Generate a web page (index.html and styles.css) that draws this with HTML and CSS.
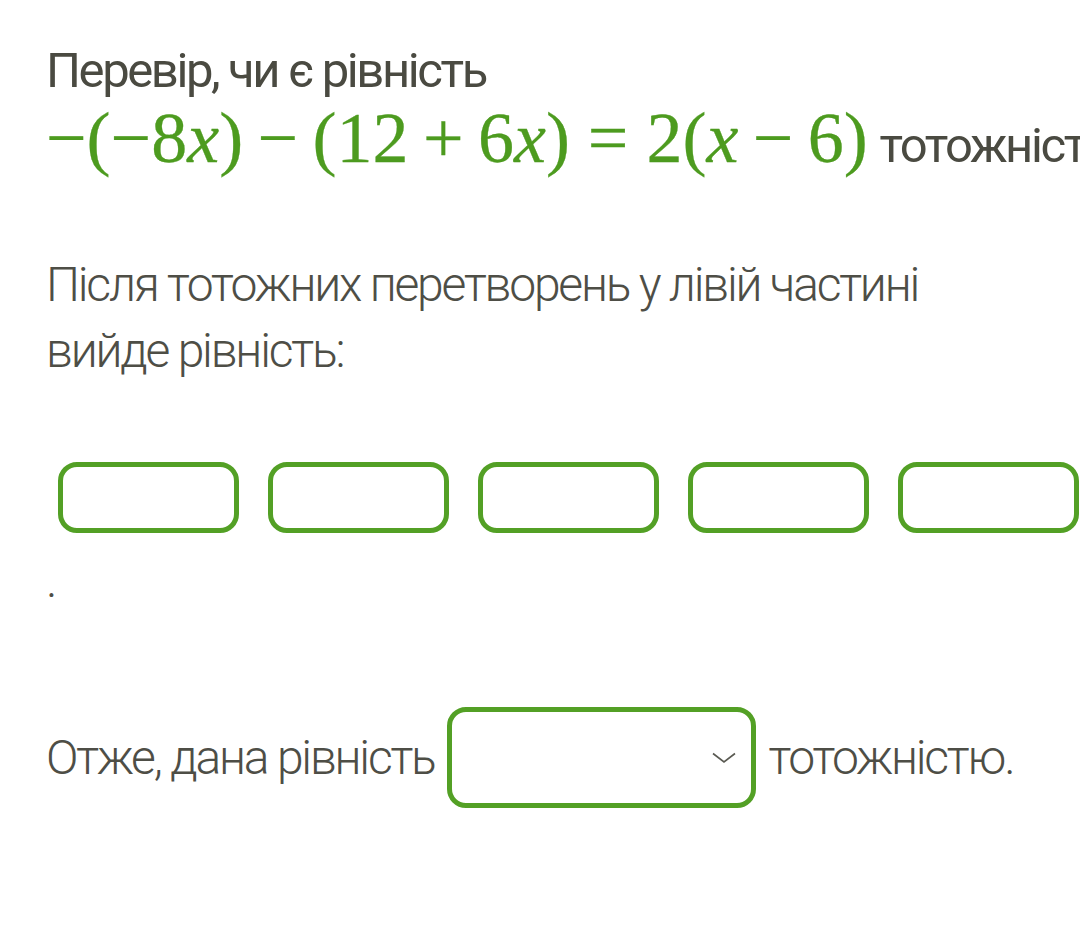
FILE: index.html
```html
<!DOCTYPE html>
<html lang="uk">
<head>
    <meta charset="UTF-8">
    <meta name="viewport" content="width=device-width, initial-scale=1.0">
    <title>Тотожність</title>
    <link rel="stylesheet" href="styles.css">
</head>
<body>
    <div class="task">
        <div class="task-title">Перевір, чи є рівність</div>
        <div class="task-line">
            <span class="math"><span>−(−8</span><i>x</i><span>)</span><span class="bin">−</span><span>(12</span><span class="bin">+</span><span>6</span><i>x</i><span>)</span><span class="rel">=</span><span>2(</span><i>x</i><span class="bin">−</span><span>6)</span></span>
            тотожністю.
        </div>

        <p class="text">Після тотожних перетворень у лівій частині<br>вийде рівність:</p>

        <div class="slots">
            <div class="slot"></div>
            <div class="slot"></div>
            <div class="slot"></div>
            <div class="slot"></div>
            <div class="slot"></div>
        </div>
        <p class="text dot">.</p>

        <div class="answer">
            <span class="text">Отже, дана рівність</span>
            <div class="select">
                <svg width="24" height="12" viewBox="0 0 24 12"><path d="M1 1.5 L12 10 L23 1.5" fill="none" stroke="#5a5a52" stroke-width="1.6"/></svg>
            </div>
            <span class="text">тотожністю.</span>
        </div>
    </div>
</body>
</html>
```
FILE: styles.css
```css
body {
    margin: 0;
    background: #fff;
    font-family: Roboto, "Noto Sans", sans-serif;
    color: #4a4a41;
    overflow: hidden;
}
.task {
    padding: 33px 0 0 46px;
}
.task-title,
.task-line {
    font-size: 49px;
    font-weight: 400;
    line-height: 75px;
    letter-spacing: -2.4px;
    white-space: nowrap;
}
.math {
    font-family: "Liberation Serif", "DejaVu Serif", serif;
    font-weight: 400;
    font-size: 72px;
    line-height: 0;
    letter-spacing: 0;
    color: #4d9b1f;
    margin-right: 2px;
    -webkit-text-stroke: 0.3px #4d9b1f;
}
.math i {
    font-style: italic;
}
.bin {
    margin: 0 0.2em;
}
.rel {
    margin: 0 0.25em;
}
.text {
    font-size: 48px;
    font-weight: 300;
    line-height: 66px;
    letter-spacing: -2.2px;
    white-space: nowrap;
    color: #4e4e46;
}
p.text {
    margin: 69px 0 0;
}
.slots {
    display: flex;
    gap: 29px;
    margin: 78px 0 0 12px;
}
.slot {
    width: 181px;
    height: 71px;
    box-sizing: border-box;
    border: 5px solid #53a025;
    border-radius: 19px;
}
p.dot {
    margin-top: 15px;
}
.answer {
    display: flex;
    align-items: center;
    margin-top: 93px;
}
.select {
    width: 309px;
    height: 101px;
    box-sizing: border-box;
    border: 5px solid #53a025;
    border-radius: 19px;
    margin: 0 13px 0 12px;
    display: flex;
    align-items: center;
    justify-content: flex-end;
    padding-right: 15px;
}
```
